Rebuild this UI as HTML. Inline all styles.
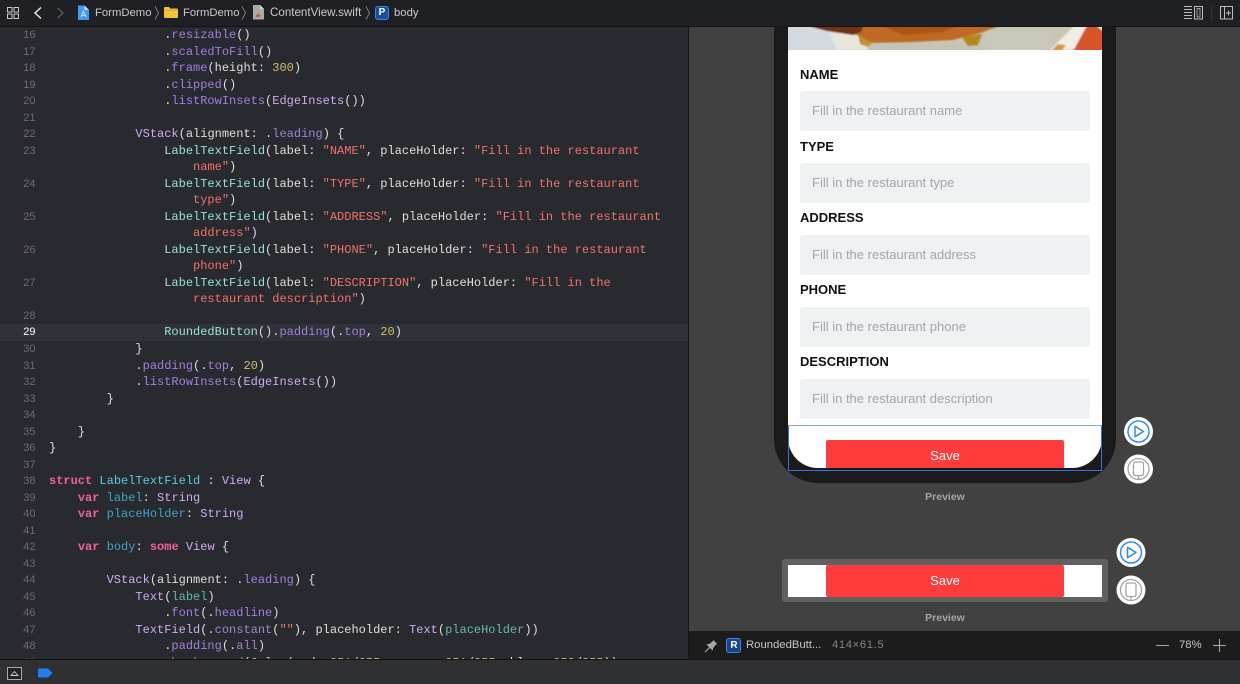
<!DOCTYPE html>
<html><head><meta charset="utf-8"><style>
html,body{margin:0;padding:0;background:#292a30;}
#r{position:relative;width:1240px;height:684px;overflow:hidden;font-family:"Liberation Sans",sans-serif;background:#292a30;}
#r div,#r svg,#r pre{position:absolute;}
pre{margin:0;font-family:"Liberation Mono",monospace;font-size:12px;line-height:16.52px;color:#dfdfe0;}
.t{color:#dfdfe0}.k{color:#f0609c;font-weight:bold}.m{color:#a27fdc}.y{color:#cfaaf5}.p{color:#95e3cf}.s{color:#ee7367}.n{color:#d0bf69}.d{color:#5cc8e8}.c{color:#41a1c0}.g{color:#67b7a4}
.lb{left:800px;font-size:13px;font-weight:bold;color:#111;line-height:16px;}
.f{left:800px;width:290px;height:40px;background:#eff2f3;border-radius:3px;color:#a3a6a8;font-size:13px;line-height:40px;text-indent:12px}
.cr{color:#c9c9ca;font-size:11.3px;line-height:14px;top:6px;white-space:nowrap}
.pv{left:788px;width:314px;text-align:center;color:#a5a5a5;font-size:10.5px;font-weight:bold;line-height:14px}
</style></head><body><div id="r">

<div style="left:0;top:26px;width:688px;height:633px;background:#292a30;overflow:hidden">
<div style="left:0;top:298.2px;width:688px;height:16.5px;background:#2f3239"></div>
<pre style="left:0;top:1.2px;width:35.5px;text-align:right;color:#6c6c70;font-family:'Liberation Sans',sans-serif;font-size:11px;filter:blur(.3px)">16
17
18
19
20
21
22
23

24

25

26

27

28
<span style="color:#fff">29</span>
30
31
32
33
34
35
36
37
38
39
40
41
42
43
44
45
46
47
48
49</pre>
<pre style="left:49px;top:1.2px;white-space:pre;filter:blur(.3px)">                <span class="t">.</span><span class="m">resizable</span>()
                <span class="t">.</span><span class="m">scaledToFill</span>()
                <span class="t">.</span><span class="m">frame</span>(height: <span class="n">300</span>)
                <span class="t">.</span><span class="m">clipped</span>()
                <span class="t">.</span><span class="m">listRowInsets</span>(<span class="y">EdgeInsets</span>())

            <span class="y">VStack</span>(alignment: .<span class="m">leading</span>) {
                <span class="p">LabelTextField</span>(label: <span class="s">"NAME"</span>, placeHolder: <span class="s">"Fill in the restaurant</span>
                    <span class="s">name"</span>)
                <span class="p">LabelTextField</span>(label: <span class="s">"TYPE"</span>, placeHolder: <span class="s">"Fill in the restaurant</span>
                    <span class="s">type"</span>)
                <span class="p">LabelTextField</span>(label: <span class="s">"ADDRESS"</span>, placeHolder: <span class="s">"Fill in the restaurant</span>
                    <span class="s">address"</span>)
                <span class="p">LabelTextField</span>(label: <span class="s">"PHONE"</span>, placeHolder: <span class="s">"Fill in the restaurant</span>
                    <span class="s">phone"</span>)
                <span class="p">LabelTextField</span>(label: <span class="s">"DESCRIPTION"</span>, placeHolder: <span class="s">"Fill in the</span>
                    <span class="s">restaurant description"</span>)

                <span class="p">RoundedButton</span>().<span class="m">padding</span>(.<span class="m">top</span>, <span class="n">20</span>)
            }
            .<span class="m">padding</span>(.<span class="m">top</span>, <span class="n">20</span>)
            .<span class="m">listRowInsets</span>(<span class="y">EdgeInsets</span>())
        }

    }
}

<span class="k">struct</span> <span class="d">LabelTextField</span> : <span class="y">View</span> {
    <span class="k">var</span> <span class="c">label</span>: <span class="y">String</span>
    <span class="k">var</span> <span class="c">placeHolder</span>: <span class="y">String</span>

    <span class="k">var</span> <span class="c">body</span>: <span class="k">some</span> <span class="y">View</span> {

        <span class="y">VStack</span>(alignment: .<span class="m">leading</span>) {
            <span class="y">Text</span>(<span class="g">label</span>)
                .<span class="m">font</span>(.<span class="m">headline</span>)
            <span class="y">TextField</span>(.<span class="m">constant</span>(<span class="s">""</span>), placeholder: <span class="y">Text</span>(<span class="g">placeHolder</span>))
                .<span class="m">padding</span>(.<span class="m">all</span>)
                .<span class="m">background</span>(<span class="y">Color</span>(red: <span class="n">251</span>/<span class="n">255</span>, green: <span class="n">251</span>/<span class="n">255</span>, blue: <span class="n">253</span>/<span class="n">255</span>))</pre>
</div>

<!-- top bar -->
<div style="left:0;top:0;width:1240px;height:26px;background:#1f2023;border-bottom:1px solid #141416;box-sizing:content-box"></div>
<svg style="left:0;top:0" width="440" height="26" viewBox="0 0 440 26" fill="none">
<g stroke="#c8c8c8" stroke-width="1">
<rect x="7.5" y="7.5" width="4.5" height="4.5"/><rect x="14" y="7.5" width="4.5" height="4.5"/><rect x="7.5" y="14" width="4.5" height="4.5"/><rect x="14" y="14" width="4.5" height="4.5"/>
</g>
<path d="M41 7.5L35 13L41 18.5" stroke="#e6e6e6" stroke-width="1.5"/>
<path d="M57.5 8L63 13L57.5 18" stroke="#5c5c5e" stroke-width="1.3"/>
<path d="M78 5.5h6.500l4.500 4.500v10H78z" fill="#3f9bf0"/><path d="M84.500 5.500l4.500 4.500h-4.500z" fill="#bcdcfa"/><path d="M81 17l2.500-6 2.500 6M81.500 15.500h4" stroke="#e5f2ff" stroke-width=".8"/>
<path d="M155 6.500l3.500 6.500-3.500 6.500" stroke="#8c8c8e" stroke-width=".8"/>
<path d="M164 8a1 1 0 0 1 1-1h4l1.200 1.500H177a1 1 0 0 1 1 1V17a1 1 0 0 1-1 1h-12a1 1 0 0 1-1-1z" fill="#f5c33b"/>
<path d="M164 9.500h14v1h-14z" fill="#d9a520"/>
<path d="M242 6.500l3.500 6.500-3.500 6.500" stroke="#8c8c8e" stroke-width=".8"/>
<path d="M253 5h7l4 4v10.500h-11z" fill="#a9a9a9"/><path d="M260 5l4 4h-4z" fill="#d8d8d8"/><path d="M255.500 16.500c2 1 4.500.5 5.500-1.500-1 .5-2 .5-3 0l2-2.500-3 2z" fill="#d0452f"/>
<path d="M366 6.500l3.500 6.500-3.500 6.500" stroke="#8c8c8e" stroke-width=".8"/>
<rect x="375.500" y="6.500" width="13" height="13" rx="2.500" fill="#1b4d9c" stroke="#3a86e8"/>
</svg>
<div style="left:375px;top:6px;width:14px;height:14px;color:#fff;font-size:10px;font-weight:bold;text-align:center;line-height:14px">P</div>
<div class="cr" style="left:95px">FormDemo</div>
<div class="cr" style="left:183px">FormDemo</div>
<div class="cr" style="left:270px;font-size:11.6px">ContentView.swift</div>
<div class="cr" style="left:394px">body</div>
<svg style="left:1180px;top:0" width="60" height="26" viewBox="0 0 60 26" fill="none" stroke="#bdbdbd">
<path d="M4 6.500h8M4 9.500h8M4 12.500h8M4 15.500h8M4 18.500h8" stroke-width="1"/>
<rect x="14.500" y="6.500" width="8" height="12.500"/><rect x="17" y="8.500" width="3" height="8.500" stroke-width=".8"/>
<path d="M31.500 5v16" stroke="#333" stroke-width="1"/>
<rect x="40.500" y="6.500" width="12" height="12.500"/><path d="M44.500 6.500v12.500M46 13h5M48.500 10.500v5" stroke-width="1"/>
</svg>

<!-- right pane -->
<div style="left:688px;top:27px;width:552px;height:604px;background:#414141;border-left:1px solid #161618;box-sizing:border-box;overflow:hidden"></div>

<!-- phone -->
<div style="left:774px;top:27px;width:342px;height:456px;background:#1a1a1a;border-radius:0 0 44px 44px"></div>
<div style="left:788px;top:27px;width:314px;height:441px;background:#fff;border-radius:0 0 30px 30px;overflow:hidden"></div>
<svg style="left:788px;top:27px" width="314" height="23" viewBox="0 0 314 23">
<defs><filter id="b" x="-5%" y="-30%" width="110%" height="160%"><feGaussianBlur stdDeviation=".8"/></filter></defs>
<rect width="314" height="23" fill="#c6c5b6"/>
<g filter="url(#b)">
<path d="M-5 -5h60l25 28H-5z" fill="#d3dbe0"/>
<path d="M42 6l33 0 10 17H48z" fill="#e6e6da"/>
<path d="M80 17h95l15 6H80z" fill="#c4c3b6"/>
<path d="M200 3l60 0 5 20h-70z" fill="#c9c9bb"/>
<path d="M22 -5h190l-3 5-17 6-27 7-40 2-43 1-13-8-30-4-15-4z" fill="#bf6a20"/>
<path d="M22 -5h55l-4 10-8 3-26-4-15-4z" fill="#6e3215"/>
<path d="M85 -5h95l-25 10-40 3z" fill="#a85618"/>
<path d="M70 8l14 8-4 4-8-3z" fill="#c0922f"/>
<path d="M174 10l20-3-4 11-10 1z" fill="#b8841f"/>
<path d="M262 23l28-28h24v28z" fill="#efeee6"/>
<path d="M283 28l18-33h18v33z" fill="#d6552a"/>
<path d="M304 -5h12v10z" fill="#efeee6"/>
<path d="M264 23l6-6 8 1-4 5z" fill="#e89030"/>
</g>
</svg>

<div class="lb" style="top:66.5px">NAME</div>
<div class="f" style="top:91px">Fill in the restaurant name</div>
<div class="lb" style="top:138.5px">TYPE</div>
<div class="f" style="top:163px">Fill in the restaurant type</div>
<div class="lb" style="top:210px">ADDRESS</div>
<div class="f" style="top:235px">Fill in the restaurant address</div>
<div class="lb" style="top:281.5px">PHONE</div>
<div class="f" style="top:307px">Fill in the restaurant phone</div>
<div class="lb" style="top:353.5px">DESCRIPTION</div>
<div class="f" style="top:378.5px">Fill in the restaurant description</div>

<div style="left:826px;top:440px;width:238px;height:28px;background:#ff3b3b;border-radius:2px 2px 0 0"></div>
<div style="left:826px;top:448px;width:238px;line-height:16px;color:#fff;font-size:13px;text-align:center">Save</div>
<div style="left:788px;top:425px;width:314px;height:46px;box-sizing:border-box;border:1px solid #2f74e8;border-top-color:#7fa8f0"></div>
<div class="pv" style="top:490px">Preview</div>

<!-- second preview -->
<div style="left:782px;top:559px;width:326px;height:43px;background:#606060;border-radius:3px"></div>
<div style="left:788px;top:565px;width:314px;height:32px;background:#fff"></div>
<div style="left:826px;top:565px;width:238px;height:32px;background:#ff3b3b;border-radius:2px;color:#fff;font-size:13px;line-height:32px;text-align:center">Save</div>
<div class="pv" style="top:611px">Preview</div>

<!-- round buttons -->
<svg style="left:1110px;top:410px" width="60" height="200" viewBox="0 0 60 200" fill="none">
<g>
<circle cx="28.5" cy="21.5" r="14.5" fill="#fff"/>
<circle cx="28.5" cy="21.5" r="10.5" stroke="#2b8bf5" stroke-width="1.5"/>
<path d="M25 16.3l8.500 5.200-8.500 5.200z" stroke="#2b8bf5" stroke-width="1.5" stroke-linejoin="round"/>
<circle cx="28.5" cy="59" r="14.5" fill="#fff"/>
<circle cx="28.5" cy="59" r="10.5" stroke="#a3a3a3" stroke-width="1.3"/>
<rect x="23.5" y="52" width="10" height="13.5" rx="2" stroke="#a3a3a3" stroke-width="1.3"/>
<path d="M28.5 65.5v4" stroke="#a3a3a3" stroke-width="1.3"/>
</g>
<g transform="translate(-7.5 121)">
<circle cx="28.5" cy="21.5" r="14.5" fill="#fff"/>
<circle cx="28.5" cy="21.5" r="10.5" stroke="#2b8bf5" stroke-width="1.5"/>
<path d="M25 16.3l8.500 5.200-8.500 5.200z" stroke="#2b8bf5" stroke-width="1.5" stroke-linejoin="round"/>
<circle cx="28.5" cy="59" r="14.5" fill="#fff"/>
<circle cx="28.5" cy="59" r="10.5" stroke="#a3a3a3" stroke-width="1.3"/>
<rect x="23.5" y="52" width="10" height="13.5" rx="2" stroke="#a3a3a3" stroke-width="1.3"/>
<path d="M28.5 65.5v4" stroke="#a3a3a3" stroke-width="1.3"/>
</g>
</svg>

<!-- preview bottom bar -->
<div style="left:688px;top:631px;width:552px;height:28px;background:#1c1c1d;border-left:1px solid #161618;box-sizing:border-box"></div>
<svg style="left:700px;top:636px" width="44" height="20" viewBox="0 0 44 20" fill="none">
<path d="M5 16l4.500-4.500" stroke="#b0b0b0" stroke-width="1"/>
<path d="M6.500 8.500l6 6 1-3 3-3.500 1 .2-4.500-4.500.2 1-3.500 3z" fill="#a8a8a8"/>
<rect x="26.500" y="2.500" width="14" height="14" rx="2.500" fill="#16458e" stroke="#3a86e8"/>
</svg>
<div style="left:726px;top:638px;width:16px;height:16px;color:#fff;font-size:10px;font-weight:bold;text-align:center;line-height:15px">R</div>
<div style="left:746px;top:638px;color:#c8c8c8;font-size:11.3px;line-height:14px;white-space:nowrap">RoundedButt...</div>
<div style="left:832px;top:638px;color:#858585;font-size:11.3px;line-height:14px;white-space:nowrap;letter-spacing:.6px">414×61.5</div>
<div style="left:1179px;top:638px;color:#c8c8c8;font-size:11.3px;line-height:14px">78%</div>
<svg style="left:1150px;top:636px" width="80" height="20" viewBox="0 0 80 20" fill="none" stroke="#a8a8a8" stroke-width="1">
<path d="M6 9.500h13"/><path d="M63 9.500h13M69.500 3v13"/>
</svg>

<!-- status bar -->
<div style="left:0;top:659px;width:1240px;height:25px;background:#2f3033;border-top:1px solid #121214;box-sizing:border-box"></div>
<svg style="left:0;top:660px" width="60" height="24" viewBox="0 0 60 24" fill="none">
<rect x="7.500" y="7.500" width="14" height="12" stroke="#a8a8a8" fill="#232325"/>
<path d="M11 15.500l3.500-4 3.500 4z" stroke="#d0d0d0" stroke-width=".9"/>
<path d="M38 9.500a1 1 0 0 1 1-1h9l4.500 4.500-4.500 4.500H39a1 1 0 0 1-1-1z" fill="#1f7ef0"/>
</svg>
</div></body></html>
